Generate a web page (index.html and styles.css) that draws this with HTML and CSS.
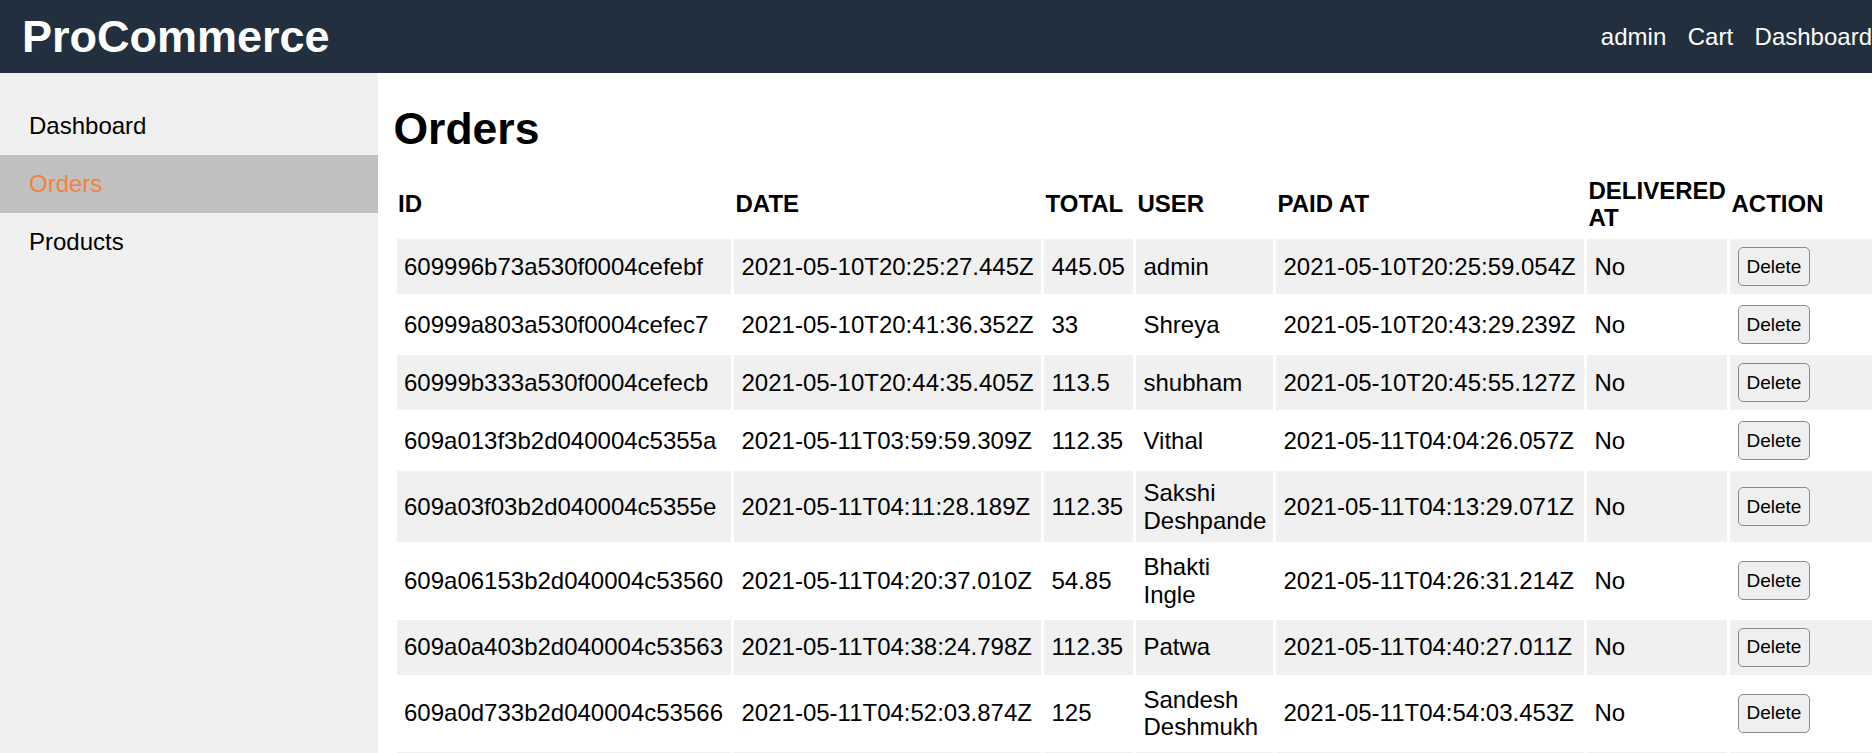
FILE: index.html
```html
<!DOCTYPE html>
<html lang="en">
<head>
<meta charset="utf-8">
<title>ProCommerce - Orders</title>
<link rel="stylesheet" href="styles.css">
</head>
<body>
<header class="topbar">
  <a class="brand" href="#">ProCommerce</a>
  <nav class="topnav">
    <a href="#">admin</a>
    <a href="#">Cart</a>
    <a href="#">Dashboard</a>
  </nav>
</header>
<div class="layout">
  <aside class="sidebar">
    <a class="side-link" href="#">Dashboard</a>
    <a class="side-link active" href="#">Orders</a>
    <a class="side-link" href="#">Products</a>
  </aside>
  <main class="content">
    <h1 class="page-title">Orders</h1>
    <table class="orders">
      <colgroup>
        <col class="c-id">
        <col class="c-date">
        <col class="c-total">
        <col class="c-user">
        <col class="c-paid">
        <col class="c-deliv">
        <col class="c-action">
      </colgroup>
      <thead>
        <tr>
          <th>ID</th>
          <th>DATE</th>
          <th>TOTAL</th>
          <th>USER</th>
          <th>PAID AT</th>
          <th>DELIVERED AT</th>
          <th>ACTION</th>
        </tr>
      </thead>
      <tbody>
        <tr>
          <td>609996b73a530f0004cefebf</td>
          <td>2021-05-10T20:25:27.445Z</td>
          <td>445.05</td>
          <td class="user">admin</td>
          <td>2021-05-10T20:25:59.054Z</td>
          <td>No</td>
          <td><button class="btn">Delete</button></td>
        </tr>
        <tr>
          <td>60999a803a530f0004cefec7</td>
          <td>2021-05-10T20:41:36.352Z</td>
          <td>33</td>
          <td class="user">Shreya</td>
          <td>2021-05-10T20:43:29.239Z</td>
          <td>No</td>
          <td><button class="btn">Delete</button></td>
        </tr>
        <tr>
          <td>60999b333a530f0004cefecb</td>
          <td>2021-05-10T20:44:35.405Z</td>
          <td>113.5</td>
          <td class="user">shubham</td>
          <td>2021-05-10T20:45:55.127Z</td>
          <td>No</td>
          <td><button class="btn">Delete</button></td>
        </tr>
        <tr>
          <td>609a013f3b2d040004c5355a</td>
          <td>2021-05-11T03:59:59.309Z</td>
          <td>112.35</td>
          <td class="user">Vithal</td>
          <td>2021-05-11T04:04:26.057Z</td>
          <td>No</td>
          <td><button class="btn">Delete</button></td>
        </tr>
        <tr>
          <td>609a03f03b2d040004c5355e</td>
          <td>2021-05-11T04:11:28.189Z</td>
          <td>112.35</td>
          <td class="user">Sakshi Deshpande</td>
          <td>2021-05-11T04:13:29.071Z</td>
          <td>No</td>
          <td><button class="btn">Delete</button></td>
        </tr>
        <tr>
          <td>609a06153b2d040004c53560</td>
          <td>2021-05-11T04:20:37.010Z</td>
          <td>54.85</td>
          <td class="user">Bhakti Ingle</td>
          <td>2021-05-11T04:26:31.214Z</td>
          <td>No</td>
          <td><button class="btn">Delete</button></td>
        </tr>
        <tr>
          <td>609a0a403b2d040004c53563</td>
          <td>2021-05-11T04:38:24.798Z</td>
          <td>112.35</td>
          <td class="user">Patwa</td>
          <td>2021-05-11T04:40:27.011Z</td>
          <td>No</td>
          <td><button class="btn">Delete</button></td>
        </tr>
        <tr>
          <td>609a0d733b2d040004c53566</td>
          <td>2021-05-11T04:52:03.874Z</td>
          <td>125</td>
          <td class="user">Sandesh Deshmukh</td>
          <td>2021-05-11T04:54:03.453Z</td>
          <td>No</td>
          <td><button class="btn">Delete</button></td>
        </tr>
        <tr>
          <td>609a10f23b2d040004c5356a</td>
          <td>2021-05-11T05:06:12.530Z</td>
          <td>112.35</td>
          <td class="user">Rahul</td>
          <td>2021-05-11T05:07:45.118Z</td>
          <td>No</td>
          <td><button class="btn">Delete</button></td>
        </tr>
      </tbody>
    </table>
  </main>
</div>
</body>
</html>
```
FILE: styles.css
```css
html, body {
  margin: 0;
  padding: 0;
  overflow: hidden;
}

body {
  font-family: "Liberation Sans", Arial, Helvetica, sans-serif;
  font-size: 24px;
  color: #000;
  background: #fff;
}

a {
  text-decoration: none;
  color: inherit;
}

/* Top bar */
.topbar {
  height: 73px;
  background: #222f3e;
  color: #fff;
  display: flex;
  align-items: center;
  justify-content: space-between;
  padding: 0 0 0 22px;
}

.brand {
  font-size: 45px;
  font-weight: bold;
  line-height: 52px;
}

.topnav {
  display: flex;
  gap: 21.5px;
  font-size: 24px;
  line-height: 28px;
}

/* Layout */
.layout {
  display: flex;
  min-height: calc(100vh - 73px);
}

.sidebar {
  flex: 0 0 378px;
  background: #f0f0f0;
  padding-top: 24px;
  display: flex;
  flex-direction: column;
}

.side-link {
  display: block;
  padding: 15px 29px;
  line-height: 28px;
  font-size: 24px;
  color: #000;
}

.side-link.active {
  background: #c0c0c0;
  color: #f5823c;
}

.content {
  flex: 1 1 auto;
  min-width: 0;
  padding: 0 0 0 15.5px;
}

.page-title {
  font-size: 44.5px;
  font-weight: bold;
  line-height: 50px;
  margin: 31px 0 15px;
}

/* Table */
.orders {
  table-layout: fixed;
  width: 1509.5px;
  border-collapse: separate;
  border-spacing: 3px;
}

.c-id { width: 334.5px; }
.c-date { width: 307px; }
.c-total { width: 89px; }
.c-user { width: 137px; }
.c-paid { width: 308px; }
.c-deliv { width: 140px; }
.c-action { width: 170px; }

.orders th {
  text-align: left;
  font-weight: bold;
  font-size: 24px;
  line-height: 27.6px;
  padding: 4.5px 1.5px;
  vertical-align: middle;
}

.orders td {
  font-size: 24px;
  line-height: 27.6px;
  padding: 8px 7.5px;
  vertical-align: middle;
  white-space: nowrap;
}

.orders td.user {
  white-space: normal;
}

.orders tbody tr:nth-child(odd) td {
  background: #f0f0f0;
}

.btn {
  font-family: "Liberation Sans", Arial, Helvetica, sans-serif;
  font-size: 19px;
  line-height: 22px;
  padding: 7.5px 8px;
  border: 1px solid #8a8a8a;
  border-radius: 5px;
  background: #efefef;
  color: #000;
  display: inline-block;
  vertical-align: middle;
}
```
